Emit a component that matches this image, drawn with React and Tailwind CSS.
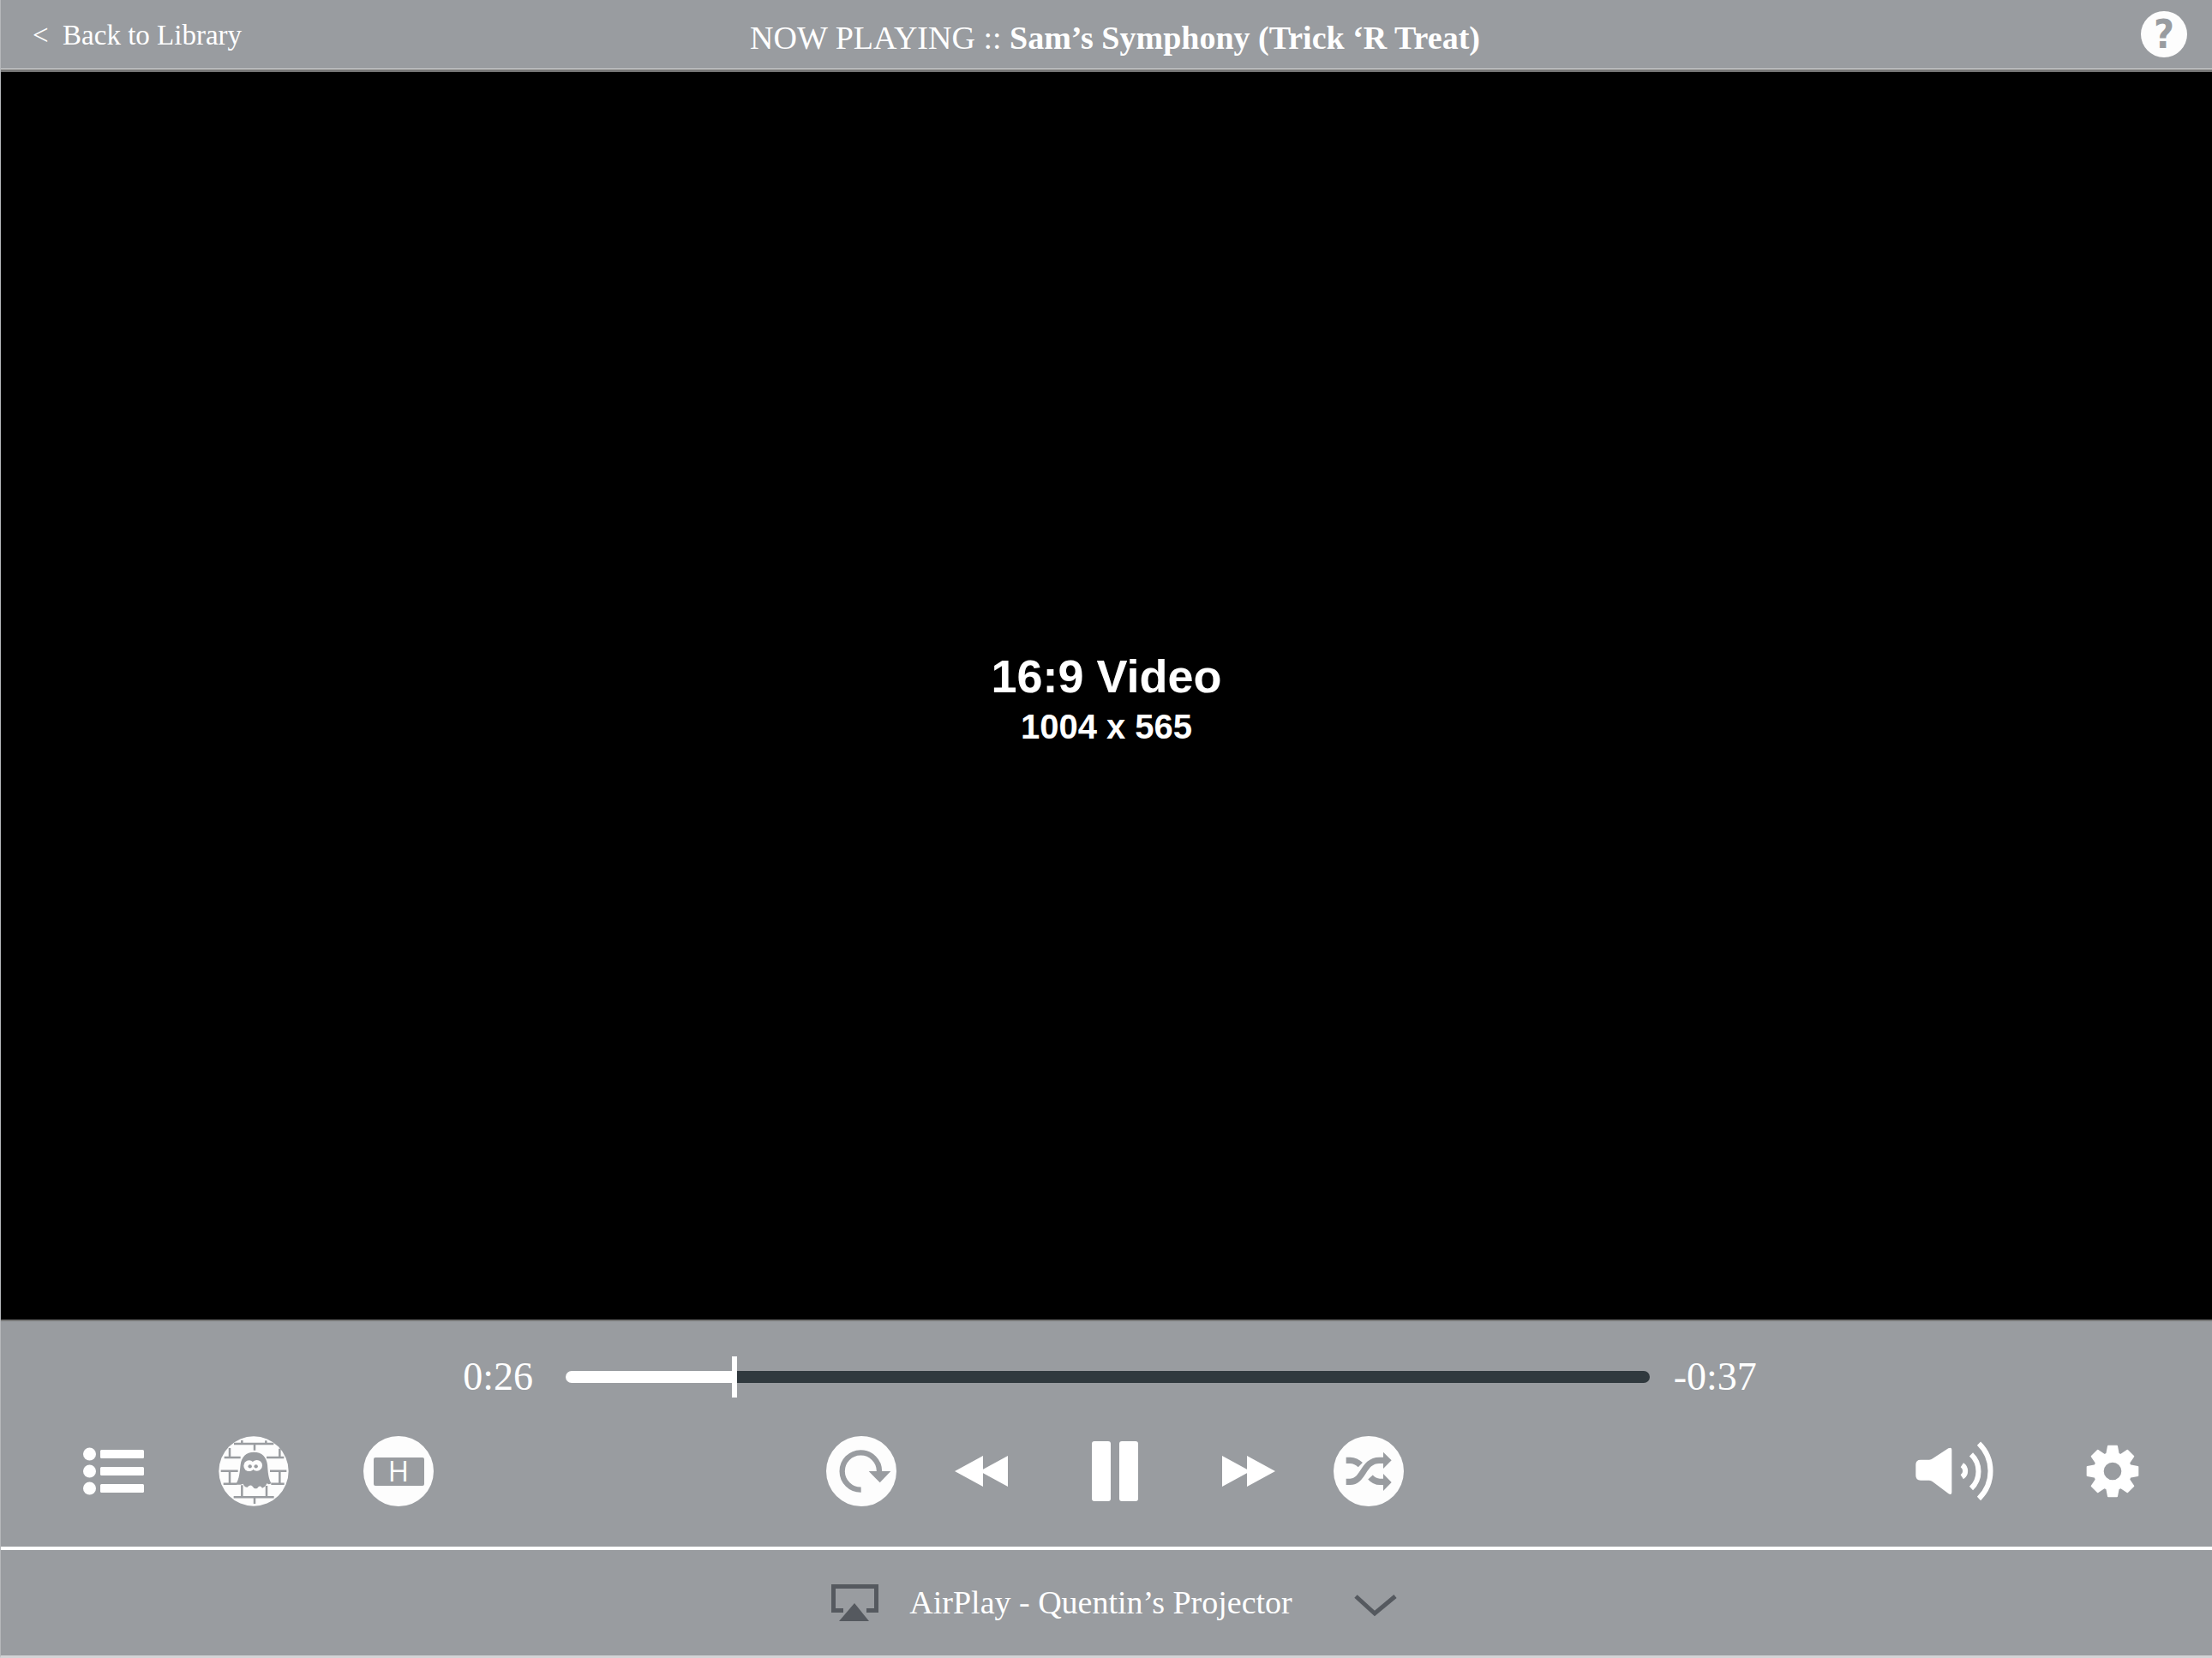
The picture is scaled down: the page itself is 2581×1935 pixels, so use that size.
import React from "react";

function IconButton({ label, className = "", children }) {
  return (
    <button type="button" aria-label={label} className={`flex shrink-0 items-center justify-center ${className}`}>
      {children}
    </button>
  );
}

function ListIcon() {
  return (
    <svg className="h-14 w-[71px]" viewBox="0 0 71 56" fill="currentColor" aria-hidden="true">
      {[8, 28, 48].map((y) => (
        <g key={y}>
          <circle cx="7.5" cy={y} r="7.5" />
          <rect x="20" y={y - 5} width="51" height="10" rx="1.5" />
        </g>
      ))}
    </svg>
  );
}

function GhostIcon() {
  return (
    <svg className="size-[82px]" viewBox="526 48 246 246" aria-hidden="true">
      <circle cx="649" cy="171" r="122" fill="#fdfdfd" />
      <path
        d="M580 75H719M546 123H603M694 123H755M534 170H594M706 170H764M543 215H590M710 215H756M579 262H720M608 63V75M692 64V75M652 75V98M565 90V123M740 92V123M565 170V215M740 170V215M608 220V262M694 222V262M652 262V285"
        fill="none"
        stroke="#999ca0"
        strokeWidth="7.5"
      />
      <path
        d="M650 104C622 104 606 122 603 148C600 175 599 198 586 218Q600 220 612 215Q617 228 627 227Q637 216 645 224Q652 236 662 230Q671 217 679 230Q690 227 695 214Q702 219 711 214C700 196 699 174 697 148C694 122 678 104 650 104Z"
        fill="#999ca0"
      />
      <circle cx="633" cy="152" r="19" fill="#fdfdfd" />
      <circle cx="660" cy="151" r="19" fill="#fdfdfd" />
      <circle cx="636" cy="154" r="6.5" fill="#999ca0" />
      <circle cx="657" cy="154" r="6.5" fill="#999ca0" />
    </svg>
  );
}

function RepeatIcon() {
  return (
    <svg className="size-[82px]" viewBox="72 48 246 246" aria-hidden="true">
      <circle cx="195" cy="171" r="123" fill="#fdfdfd" />
      <path d="M194 236A65 65 0 1 1 258 171V176" fill="none" stroke="#999ca0" strokeWidth="19" />
      <path d="M221 171H298L260 211Z" fill="#999ca0" />
    </svg>
  );
}

function RewindIcon() {
  return (
    <svg className="h-9 w-[62px]" viewBox="0 0 62 36" fill="currentColor" aria-hidden="true">
      <path d="M0 18L33 0V36ZM29 18L62 0V36Z" />
    </svg>
  );
}

function ForwardIcon() {
  return (
    <svg className="h-9 w-[62px]" viewBox="0 0 62 36" fill="currentColor" aria-hidden="true">
      <path d="M62 18L29 0V36ZM33 18L0 0V36Z" />
    </svg>
  );
}

function PauseIcon() {
  return (
    <svg className="h-[70px] w-[54px]" viewBox="0 0 54 70" fill="currentColor" aria-hidden="true">
      <rect width="22" height="70" rx="3" />
      <rect x="32" width="22" height="70" rx="3" />
    </svg>
  );
}

function ShuffleIcon() {
  return (
    <svg className="size-[82px]" viewBox="768 48 246 246" aria-hidden="true">
      <circle cx="891" cy="171" r="123" fill="#fdfdfd" />
      <g fill="none" stroke="#999ca0" strokeWidth="22">
        <path d="M812 133H826Q847 134 862 149" />
        <path d="M812 208H826C874 208 870 133 928 133H944" />
        <path d="M897 192Q911 208 930 208H944" />
      </g>
      <path d="M942 104L971 133L942 162ZM942 180L971 210L942 240Z" fill="#999ca0" />
    </svg>
  );
}

function VolumeIcon() {
  return (
    <svg className="h-[70px] w-[91px]" viewBox="74 64 273 210" aria-hidden="true">
      <path
        d="M92 129H122Q129 129 134 125L189 89Q201 83 201 94V243Q201 253 190 248L134 206Q129 201 122 201H92Q75 201 75 184V146Q75 129 92 129Z"
        fill="currentColor"
      />
      <g fill="none" stroke="currentColor" strokeWidth="18">
        <path d="M237 147A25 25 0 0 1 237 189" />
        <path d="M269 110A82 82 0 0 1 269 229" />
        <path d="M296 72A135 135 0 0 1 296 265" />
      </g>
    </svg>
  );
}

function GearIcon() {
  return (
    <svg className="size-[62px]" viewBox="-93 -93 186 186" aria-hidden="true">
      <g fill="currentColor" stroke="currentColor" strokeWidth="6" strokeLinejoin="round">
        {[0, 45, 90, 135, 180, 225, 270, 315].map((a) => (
          <path key={a} d="M-15 -88H15L21 -56H-21Z" transform={`rotate(${a})`} />
        ))}
      </g>
      <circle r="49" fill="none" stroke="currentColor" strokeWidth="36" />
    </svg>
  );
}

function AirPlayIcon() {
  return (
    <svg className="h-[43px] w-[55px]" viewBox="0 0 55 43" fill="#55595f" aria-hidden="true">
      <path d="M0 0H55V33H41V28H50V5H5V28H14V33H0Z" />
      <path d="M27 22L44 43H9Z" />
    </svg>
  );
}

export default function App() {
  return (
    <div className="flex min-h-screen flex-col border-b-3 border-l border-b-[#d3d4d6] border-l-[#b5b7ba] bg-[#999ca0] font-['Liberation_Serif',serif] text-white">
      <header className="grid grid-cols-[1fr_auto_1fr] items-center border-b border-[#dcdcdc] pl-5">
        <a href="#library" className="justify-self-start whitespace-pre pb-[19px] pl-[17px] pt-[21px] text-[33px] leading-10">
          {"<  Back to Library"}
        </a>
        <h1 className="pt-2 text-[38px] leading-[44px]">
          NOW PLAYING :: <strong className="font-bold">Sam’s Symphony (Trick ‘R Treat)</strong>
        </h1>
        <button
          type="button"
          aria-label="Help"
          className="mr-[29px] flex size-[54px] items-center justify-center justify-self-end rounded-full bg-[#fdfdfd] font-['DejaVu_Sans_Condensed','DejaVu_Sans',sans-serif] text-[46px] font-bold leading-none text-[#999ca0]"
        >
          ?
        </button>
      </header>

      <main className="flex flex-1 flex-col items-center justify-center border-b-2 border-t-3 border-[#777777] bg-black pt-1 font-['Liberation_Sans',sans-serif] font-bold">
        <p className="mb-[3px] text-[54px] leading-[64px]">16:9 Video</p>
        <p className="text-[40px] leading-[48px]">1004 x 565</p>
      </main>

      <section aria-label="Playback" className="border-b-4 border-white pb-[47px] pt-[41px]">
        <div className="flex h-12 items-center justify-center pl-2 text-[46px] leading-[48px]">
          <span>0:26</span>
          <input
            type="range"
            aria-label="Position"
            min="0"
            max="100"
            step="any"
            defaultValue="15.4"
            className="ml-[38px] mr-7 h-12 w-[49vw] appearance-none bg-transparent [&::-webkit-slider-runnable-track]:h-3.5 [&::-webkit-slider-runnable-track]:rounded-full [&::-webkit-slider-runnable-track]:bg-[linear-gradient(to_right,#ffffff_15.5%,#30393e_15.5%)] [&::-webkit-slider-thumb]:-mt-[17px] [&::-webkit-slider-thumb]:h-12 [&::-webkit-slider-thumb]:w-1.5 [&::-webkit-slider-thumb]:appearance-none [&::-webkit-slider-thumb]:bg-white"
          />
          <span>-0:37</span>
        </div>

        <div className="mt-[45px] grid grid-cols-[1fr_auto_1fr] items-center pl-5">
          <div className="flex items-center gap-[87px] pl-[76px]">
            <IconButton label="Playlist"><ListIcon /></IconButton>
            <IconButton label="Wall projection"><GhostIcon /></IconButton>
            <IconButton label="Horizontal layout" className="size-[82px] rounded-full bg-[#fdfdfd]">
              <span className="flex h-[33px] w-[59px] items-center justify-center rounded-xs bg-[#999ca0] pb-0.5 font-['Open_Sans',sans-serif] text-[33px] leading-[33px]">
                H
              </span>
            </IconButton>
          </div>
          <div className="flex items-center gap-[68px]">
            <IconButton label="Repeat"><RepeatIcon /></IconButton>
            <div className="flex items-center gap-[98px]">
              <IconButton label="Rewind"><RewindIcon /></IconButton>
              <IconButton label="Pause"><PauseIcon /></IconButton>
              <IconButton label="Fast forward"><ForwardIcon /></IconButton>
            </div>
            <IconButton label="Shuffle"><ShuffleIcon /></IconButton>
          </div>
          <div className="flex items-center justify-end gap-[108px] pr-[85px]">
            <IconButton label="Volume"><VolumeIcon /></IconButton>
            <IconButton label="Settings"><GearIcon /></IconButton>
          </div>
        </div>
      </section>

      <footer className="flex justify-center py-[38px] pl-[18px]">
        <button type="button" className="flex items-center text-[38px] leading-[47px]">
          <AirPlayIcon />
          <span className="ml-9 mr-[72px]">AirPlay - Quentin’s Projector</span>
          <svg className="mt-1.5 h-[26px] w-[50px]" viewBox="0 0 50 26" fill="none" stroke="#55595f" strokeWidth="5" aria-hidden="true">
            <path d="M2 2L24 22L48 2" />
          </svg>
        </button>
      </footer>
    </div>
  );
}
